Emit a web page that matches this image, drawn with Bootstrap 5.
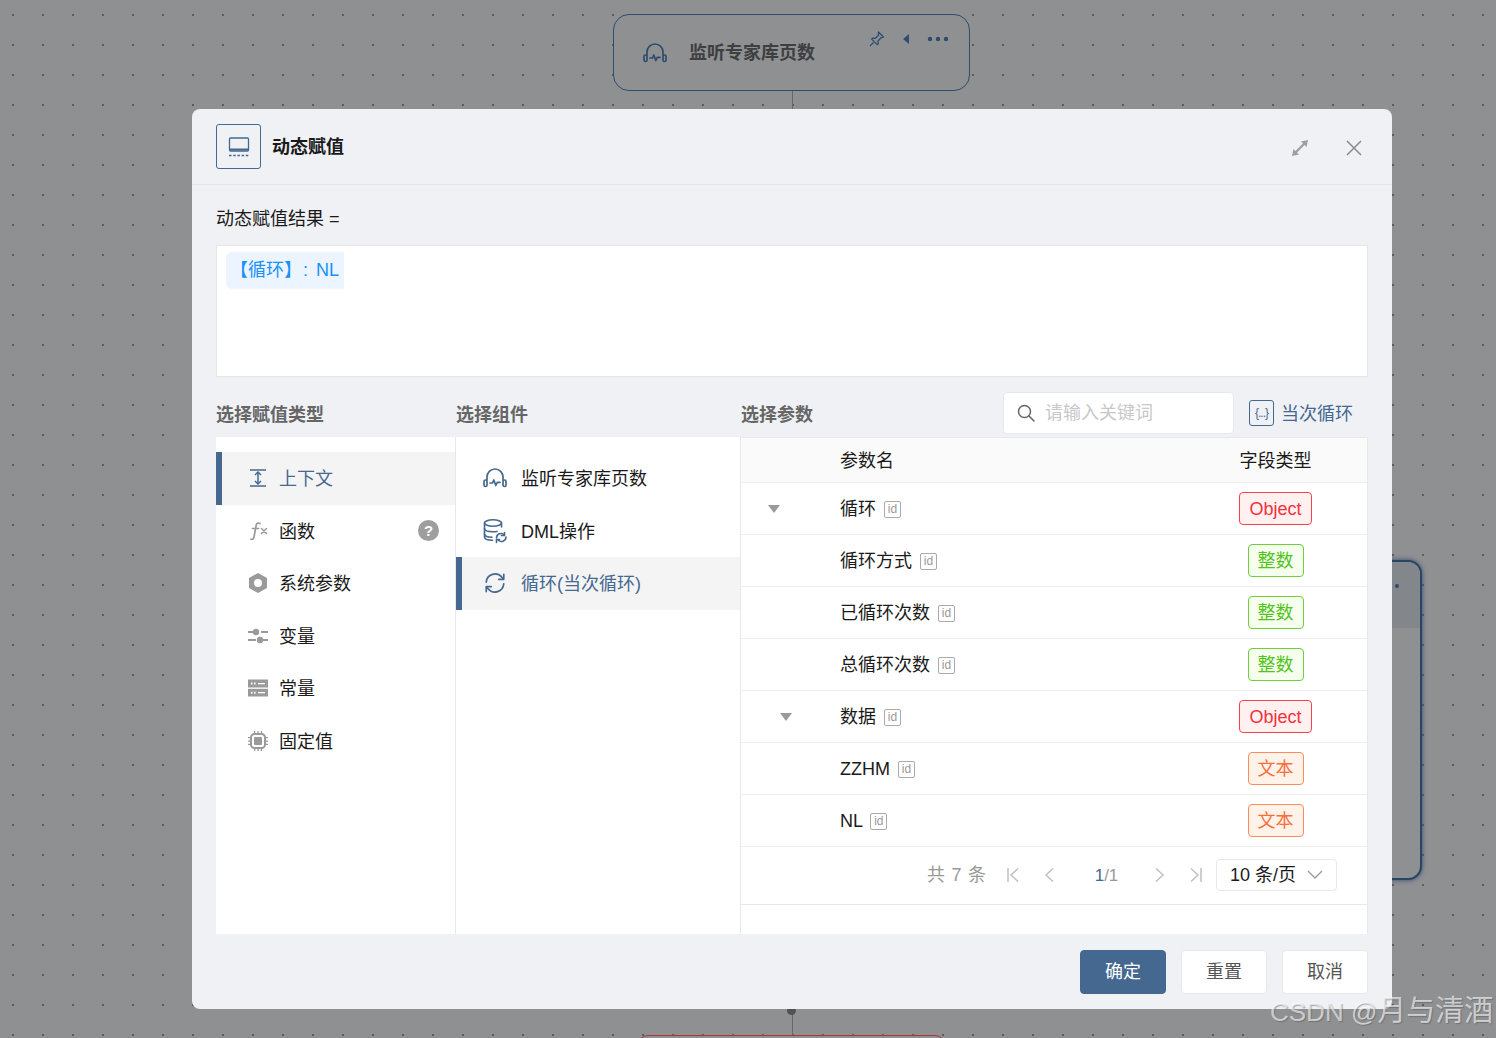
<!DOCTYPE html>
<html lang="zh">
  <head>
    <meta charset="UTF-8" />
    <title>动态赋值</title>
    <link href="https://cdn.jsdelivr.net/npm/bootstrap@5.3.0/dist/css/bootstrap.min.css" rel="stylesheet" />
    <style>
      html, body { height: 100%; overflow: hidden; }
      body { font-family: "Liberation Sans", "Noto Sans CJK SC", sans-serif; font-size: 18px; color: #1a1a1a; background: #8f9092; }
      .flow-canvas { position: relative; width: 1496px; height: 1038px; overflow: hidden; padding-top: 109px;
        background-color: #8f9092; background-image: radial-gradient(circle, #5a5b5e 0.7px, transparent 1.1px);
        background-size: 30px 30px; background-position: -2px 0; }
      .flow-node { position: absolute; border: 1.5px solid #2f4c6e; background: #8f9092; }
      .node-top { left: 613px; top: 14px; width: 357px; height: 77px; border-radius: 16px; }
      .node-top .node-name { position: absolute; left: 75px; top: 26px; font-weight: 700; color: #3e3f41; font-size: 18px; line-height: 24px; }
      .node-top svg { position: absolute; }
      .node-right { left: 1100px; top: 560px; width: 322px; height: 320px; border-radius: 14px; box-shadow: 0 0 5px #2f4c6e; border: 2px solid #2a4465; overflow: hidden; }
      .node-right-head { height: 66px; background: #83878b; }
      .node-right-dot { position: absolute; right: 21px; top: 22px; width: 4px; height: 4px; border-radius: 50%; background: #2f4c6e; }
      .node-bottom { left: 638px; top: 1035px; width: 307px; height: 40px; border: 1px solid #a8393c; border-radius: 10px; }
      .edge-line { position: absolute; left: 792px; width: 1px; background: #66676a; }
      .edge-a { top: 91px; height: 18px; }
      .edge-b { top: 1009px; height: 26px; }
      .edge-dot { position: absolute; left: 787px; top: 1006px; width: 9px; height: 9px; border-radius: 50%; background: #505256; }
      .assign-modal { position: relative; width: 1200px; height: 900px; margin-left: 192px; background: #eff1f5; border: 0; border-radius: 8px; }
      .assign-modal .modal-header { height: 76px; padding: 0 24px; border-bottom: 1px solid #e3e5e9; border-radius: 0; }
      .title-box { width: 45px; height: 45px; border: 1px solid #44688f; border-radius: 3px; }
      .assign-title { font-size: 18px; font-weight: 700; color: #1a1a1a; margin-left: 11px; padding-top: 2px; }
      .head-tools { margin-left: auto; gap: 34px; margin-right: 4px; padding-top: 2px; }
      .assign-modal .modal-body { padding: 23px 24px 0; flex: none; }
      .result-label { line-height: 21px; margin-bottom: 16px; padding-top: 1px; height: 21px; }
      .result-box { height: 132px; background: #fff; border: 1px solid #e4e6ea; padding: 6px 9px; margin-bottom: 15px; }
      .result-chip { display: inline-block; height: 37px; line-height: 36px; padding: 0 5px 0 4px; background: #ecf5ff; color: #1890ff; border-radius: 6px 0 0 6px; }
      .chip-colon { display: inline-block; width: 14px; text-align: left; padding-left: 1px; }
      .section-row { height: 42px; margin-bottom: 3px; }
      .section-title { font-weight: 700; color: #666; line-height: 46px; align-self: flex-start; }
      .title-type { width: 240px; }
      .title-comp { width: 285px; }
      .search-box { width: 231px; height: 42px; margin-left: auto; background: #fff; border: 1px solid #e6e8ec; border-radius: 4px; padding: 0 12px; gap: 9px; color: #c8c8c8; }
      .loop-btn { margin-left: 15px; margin-right: 15px; gap: 7px; color: #44688f; }
      .loop-label { padding-top: 2px; }
      .loop-box { width: 25px; height: 26px; border: 1px solid #44688f; border-radius: 3px; color: #44688f; font-size: 12px; line-height: 24px; text-align: center; letter-spacing: -1px; }
      .picker-panel { height: 497px; background: #fff; }
      .type-col { width: 240px; padding-top: 15px; border-right: 1px solid #e6e8ec; }
      .comp-col { width: 285px; padding-top: 15px; border-right: 1px solid #e6e8ec; }
      .param-col { flex: 1; border: 1px solid #e6e8ec; border-width: 1px 1px 0 0; }
      .pick-item { height: 52.5px; border-left: 6px solid transparent; gap: 8px; }
      .type-col .pick-item { padding-left: 23px; }
      .comp-col .pick-item { padding-left: 20px; gap: 13px; }
      .pick-item.on { background: #f4f4f5; border-left-color: #44688f; color: #44688f; }
      .pick-text { padding-top: 3px; }
      .pick-icon { width: 26px; height: 26px; flex: none; display: flex; align-items: center; justify-content: center; color: #9a9a9a; }
      .comp-col .pick-icon { color: #44688f; }
      .on .pick-icon { color: #44688f; }
      .help-dot { width: 21px; height: 21px; border-radius: 50%; background: #9e9e9e; color: #fff; font-size: 15px; font-weight: 700; line-height: 21px; text-align: center; margin-left: auto; margin-right: 16px; }
      .param-table { margin: 0; table-layout: fixed; font-size: 18px; color: #1a1a1a; }
      .param-table > :not(caption) > * > * { height: 52px; padding: 0; border-bottom: 1px solid #eceef0; box-shadow: none; vertical-align: middle; background: transparent; color: inherit; }
      .param-table thead th { height: 44px; font-weight: 400; background: #fafafa; padding-top: 4px; }
      .param-table .name-cell { padding-top: 2px; }
      .col-caret { width: 99px; }
      .col-kind { width: 183px; }
      .caret-down { display: block; width: 0; height: 0; border-left: 6.5px solid transparent; border-right: 6.5px solid transparent; border-top: 8px solid #9a9a9a; margin-left: 27px; margin-top: 2px; }
      .caret-deep { margin-left: 39px; }
      .id-mark { display: inline-block; width: 17px; height: 17px; border: 1.5px solid #aaa; border-radius: 2px; color: #999; font-size: 12px; line-height: 14px; text-align: center; margin-left: 3px; vertical-align: 2px; }
      .kind-tag { display: inline-block; height: 33px; line-height: 33px; padding: 0 9px; border: 1px solid; border-radius: 4px; }
      .kind-obj { color: #f5303d; background: #fff1f0; border-color: #f5434e; }
      .kind-int { color: #52c41a; background: #f6ffed; border-color: #6fd03c; }
      .kind-txt { color: #fa6e3c; background: #fff2e8; border-color: #fa8c5c; }
      .pager-row { height: 58px; border-bottom: 1px solid #e6e8ec; padding-right: 30px; color: #999; }
      .pager-total { margin-right: 9px; word-spacing: 1.5px; padding-top: 1px; }
      .pager-btn { width: 36px; display: flex; justify-content: center; color: #c0c0c0; }
      .pager-num { width: 75px; text-align: center; color: #999; font-size: 17px; padding-left: 4px; padding-top: 1px; }
      .pager-num b { font-weight: 400; color: #44688f; }
      .size-select { width: 121px; height: 32px; margin-left: 2px; border: 1px solid #e6e8ec; border-radius: 4px; padding: 0 13px; color: #1a1a1a; }
      .assign-modal .modal-footer { padding: 16px 24px 0; border: 0; gap: 15px; justify-content: flex-end; }
      .assign-modal .modal-footer .btn { width: 86px; height: 44px; margin: 0; font-size: 18px; padding: 0; border-radius: 4px; }
      .btn-ok { background: #44688f; border-color: #44688f; color: #fff; }
      .btn-plain { background: #fff; border-color: #e6e8ec; color: #555; }
      .watermark { position: absolute; left: 1270px; top: 993px; font-size: 26px; line-height: 36px; color: rgba(255,255,255,.62); text-shadow: 1px 1px 1px rgba(80,80,80,.45); white-space: nowrap; }
      .watermark-cjk { font-size: 29px; }
    </style>
  </head>
  <body>
    <svg width="0" height="0" class="position-absolute">
      <symbol id="ic-headset" viewBox="0 0 26 26" fill="none" stroke="currentColor" stroke-width="1.7" stroke-linecap="round" stroke-linejoin="round">
        <path d="M5 15v-3a8 8 0 0 1 16 0v3" />
        <rect x="2" y="15" width="3" height="6.5" rx="1.4" />
        <rect x="21" y="15" width="3" height="6.5" rx="1.4" />
        <path d="M8 18h2.5l1.3-3 2 5.5 1.5-3.2h2.7" />
      </symbol>
      <symbol id="ic-refresh" viewBox="0 0 26 26" fill="none" stroke="currentColor" stroke-width="1.8" stroke-linecap="round" stroke-linejoin="round">
        <path d="M3.5 12a9.6 9.6 0 0 1 17-5.2L22 8.500" />
        <path d="M22.500 3.500v5.500h-5.500" />
        <path d="M22.500 14a9.600 9.600 0 0 1-17 5.200L4 17.500" />
        <path d="M3.500 22.500v-5.500h5.500" />
      </symbol>
      <symbol id="ic-db" viewBox="0 0 26 26" fill="none" stroke="currentColor" stroke-width="1.6" stroke-linecap="round">
        <ellipse cx="11" cy="5" rx="8.500" ry="3.300" />
        <path d="M2.500 5v14c0 2 3.500 3.300 8 3.300" />
        <path d="M2.500 10.500c0 2 3.500 3.300 8.500 3.300 1.500 0 3-.1 4-.4" />
        <path d="M2.500 16c0 2 3.500 3.200 7.500 3.300" />
        <path d="M19.500 5v4" />
        <path d="M14.500 20a4.500 4.500 0 0 1 7.800-3M24 19a4.500 4.500 0 0 1-7.800 3" />
        <path d="M22.500 14.500V17.500h-3M14.500 24.500v-3h3" />
      </symbol>
    </svg>

    <div class="flow-canvas">
      <div class="flow-node node-top">
        <svg style="left:28px;top:25px" width="26" height="26"><use href="#ic-headset" style="color:#2f4c6e" /></svg>
        <span class="node-name">监听专家库页数</span>
        <svg style="left:254px;top:15px" width="18" height="18" viewBox="0 0 18 18" fill="none" stroke="#2f4c6e" stroke-width="1.3" stroke-linejoin="round"><path d="M10.500 2l5 5-2.500.8-3 3.200.2 2.800-1 .8-5.500-5.500.8-1 2.800.2 3.200-3z" /><path d="M5.500 12.500 2 16" /></svg>
        <svg style="left:288px;top:18px" width="10" height="12" viewBox="0 0 10 12" fill="#2f4c6e"><path d="M7 1v10L1 6z" /></svg>
        <svg style="left:313px;top:21px" width="22" height="6" viewBox="0 0 22 6" fill="#2f4c6e"><circle cx="3" cy="3" r="2.200" /><circle cx="11" cy="3" r="2.200" /><circle cx="19" cy="3" r="2.200" /></svg>
      </div>
      <div class="edge-line edge-a"></div>
      <div class="flow-node node-right"><div class="node-right-head"></div><div class="node-right-dot"></div></div>
      <div class="flow-node node-bottom"></div>
      <div class="edge-line edge-b"></div>
      <div class="edge-dot"></div>

      <div class="modal-content assign-modal">
        <div class="modal-header">
          <div class="title-box d-flex align-items-center justify-content-center">
            <svg width="24" height="24" viewBox="0 0 24 24" fill="none" stroke="#44688f" stroke-width="1.300"><rect x="2.500" y="3" width="19" height="13" rx="1" /><path d="M2.500 14.500h19" stroke-width="2" /><path d="M2 20.500h20" stroke-width="1.600" stroke-dasharray="2.500 1.700" /></svg>
          </div>
          <span class="assign-title">动态赋值</span>
          <div class="head-tools d-flex align-items-center">
            <svg width="20" height="20" viewBox="0 0 20 20" fill="#a0a0a0" stroke="none"><path d="M2 18l1.500-7 1.900 1.900 7.500-7.500L11 3.500 18 2l-1.500 7-1.900-1.900-7.500 7.500 1.900 1.900z" /></svg>
            <svg width="20" height="20" viewBox="0 0 20 20" fill="none" stroke="#8a8a8a" stroke-width="1.500"><path d="M3 3l14 14M17 3 3 17" /></svg>
          </div>
        </div>
        <div class="modal-body">
          <div class="result-label">动态赋值结果 =</div>
          <div class="result-box"><span class="result-chip">【循环】<span class="chip-colon">:</span>NL</span></div>

          <div class="section-row d-flex align-items-center">
            <div class="section-title title-type">选择赋值类型</div>
            <div class="section-title title-comp">选择组件</div>
            <div class="section-title">选择参数</div>
            <div class="search-box d-flex align-items-center">
              <svg width="20" height="20" viewBox="0 0 20 20" fill="none" stroke="#666" stroke-width="1.500" stroke-linecap="round"><circle cx="8.500" cy="8.500" r="6" /><path d="M13 13l5 5" /></svg>
              <span>请输入关键词</span>
            </div>
            <div class="loop-btn d-flex align-items-center"><span class="loop-box">{...}</span><span class="loop-label">当次循环</span></div>
          </div>

          <div class="picker-panel d-flex">
            <div class="type-col">
              <div class="pick-item on d-flex align-items-center">
                <span class="pick-icon"><svg width="20" height="20" viewBox="0 0 20 20" fill="none" stroke="currentColor" stroke-width="1.500"><path d="M2 2h16M2 18h16M10 4.500v11" /><path d="M7 7l3-3 3 3M7 13l3 3 3-3" /></svg></span>
                <span class="pick-text">上下文</span>
              </div>
              <div class="pick-item d-flex align-items-center">
                <span class="pick-icon"><svg width="22" height="22" viewBox="0 0 22 22" fill="none" stroke="currentColor" stroke-width="1.700" stroke-linecap="round"><path d="M13 3.500c-2-1-3.300-.3-3.800 1.500L7 17c-.4 2-1.500 2.700-3 2.200" /><path d="M5.500 8.500h6" /><path d="M14.500 8.500l5 5M19.500 8.500l-5 5" stroke-width="1.500" /></svg></span>
                <span class="pick-text">函数</span>
                <span class="help-dot">?</span>
              </div>
              <div class="pick-item d-flex align-items-center">
                <span class="pick-icon"><svg width="20" height="22" viewBox="0 0 20 22" fill="currentColor" fill-rule="evenodd"><path d="M10 1l9 5v10l-9 5-9-5V6zM10 7a4 4 0 1 0 0 8 4 4 0 0 0 0-8z" /></svg></span>
                <span class="pick-text">系统参数</span>
              </div>
              <div class="pick-item d-flex align-items-center">
                <span class="pick-icon"><svg width="22" height="18" viewBox="0 0 22 18" fill="currentColor"><path d="M1 3.900h6v2.200H1zM14 3.900h7v2.200h-7zM1 11.900h8v2.200H1zM16 11.900h5v2.200h-5z" /><circle cx="9" cy="5" r="3.200" /><circle cx="13" cy="13" r="3.200" /></svg></span>
                <span class="pick-text">变量</span>
              </div>
              <div class="pick-item d-flex align-items-center">
                <span class="pick-icon"><svg width="20" height="18" viewBox="0 0 20 18" fill="currentColor"><rect y="0.500" width="20" height="8" /><rect y="9.800" width="20" height="7.700" /><path d="M3 3.500h1.500v2H3zM6 3.500h1.500v2H6zM10 4h7v1.300h-7zM3 12.700h1.500v2H3zM6 12.700h1.500v2H6zM10 13h7v1.300h-7z" fill="#fff" /></svg></span>
                <span class="pick-text">常量</span>
              </div>
              <div class="pick-item d-flex align-items-center">
                <span class="pick-icon"><svg width="20" height="20" viewBox="0 0 20 20" fill="currentColor"><rect x="3" y="3" width="14" height="14" rx="3.500" fill="none" stroke="currentColor" stroke-width="2" /><rect x="6" y="6" width="8" height="8" rx="1" /><path d="M6 0h1.300v3H6zM9.400 0h1.300v3H9.400zM12.800 0h1.300v3h-1.300zM6 17h1.300v3H6zM9.400 17h1.300v3H9.400zM12.800 17h1.300v3h-1.300zM0 6h3v1.300H0zM0 9.400h3v1.300H0zM0 12.800h3v1.300H0zM17 6h3v1.300h-3zM17 9.400h3v1.300h-3zM17 12.800h3v1.300h-3z" /></svg></span>
                <span class="pick-text">固定值</span>
              </div>
            </div>

            <div class="comp-col">
              <div class="pick-item d-flex align-items-center">
                <span class="pick-icon"><svg width="26" height="26"><use href="#ic-headset" /></svg></span>
                <span class="pick-text">监听专家库页数</span>
              </div>
              <div class="pick-item d-flex align-items-center">
                <span class="pick-icon"><svg width="26" height="26"><use href="#ic-db" /></svg></span>
                <span class="pick-text">DML操作</span>
              </div>
              <div class="pick-item on d-flex align-items-center">
                <span class="pick-icon"><svg width="24" height="24"><use href="#ic-refresh" /></svg></span>
                <span class="pick-text">循环(当次循环)</span>
              </div>
            </div>

            <div class="param-col">
              <table class="table param-table">
                <colgroup><col class="col-caret" /><col /><col class="col-kind" /></colgroup>
                <thead>
                  <tr><th></th><th>参数名</th><th class="text-center">字段类型</th></tr>
                </thead>
                <tbody id="paramRows"></tbody>
              </table>
              <div class="pager-row d-flex align-items-center justify-content-end">
                <span class="pager-total">共 7 条</span>
                <div class="d-flex align-items-center">
                  <span class="pager-btn"><svg width="14" height="16" viewBox="0 0 14 16" fill="none" stroke="currentColor" stroke-width="1.500"><path d="M2 1v14M12 1.500 5 8l7 6.500" /></svg></span>
                  <span class="pager-btn"><svg width="12" height="16" viewBox="0 0 12 16" fill="none" stroke="currentColor" stroke-width="1.500"><path d="M10 1.500 3 8l7 6.500" /></svg></span>
                  <span class="pager-num"><b>1</b>/1</span>
                  <span class="pager-btn"><svg width="12" height="16" viewBox="0 0 12 16" fill="none" stroke="currentColor" stroke-width="1.500"><path d="M2 1.500 9 8l-7 6.500" /></svg></span>
                  <span class="pager-btn"><svg width="14" height="16" viewBox="0 0 14 16" fill="none" stroke="currentColor" stroke-width="1.500"><path d="M12 1v14M2 1.500 9 8l-7 6.500" /></svg></span>
                </div>
                <div class="size-select d-flex align-items-center justify-content-between">
                  <span>10 条/页</span>
                  <svg width="16" height="10" viewBox="0 0 16 10" fill="none" stroke="#999" stroke-width="1.300"><path d="M1 1l7 7 7-7" /></svg>
                </div>
              </div>
            </div>
          </div>
        </div>
        <div class="modal-footer">
          <button type="button" class="btn btn-ok">确定</button>
          <button type="button" class="btn btn-plain">重置</button>
          <button type="button" class="btn btn-plain">取消</button>
        </div>
      </div>

      <div class="watermark">CSDN @<span class="watermark-cjk">月与清酒</span></div>
    </div>

    <script>
      // 参数列表
      const rows = [
        { name: "循环", kind: "obj", label: "Object", caret: "caret-down" },
        { name: "循环方式", kind: "int", label: "整数" },
        { name: "已循环次数", kind: "int", label: "整数" },
        { name: "总循环次数", kind: "int", label: "整数" },
        { name: "数据", kind: "obj", label: "Object", caret: "caret-down caret-deep" },
        { name: "ZZHM", kind: "txt", label: "文本" },
        { name: "NL", kind: "txt", label: "文本" },
      ];
      document.getElementById("paramRows").innerHTML = rows
        .map(
          (r) => `<tr>
            <td>${r.caret ? `<span class="${r.caret}"></span>` : ""}</td>
            <td class="name-cell">${r.name} <span class="id-mark">id</span></td>
            <td class="text-center"><span class="kind-tag kind-${r.kind}">${r.label}</span></td>
          </tr>`
        )
        .join("");
    </script>
    <script src="https://cdn.jsdelivr.net/npm/bootstrap@5.3.0/dist/js/bootstrap.bundle.min.js"></script>
  </body>
</html>
